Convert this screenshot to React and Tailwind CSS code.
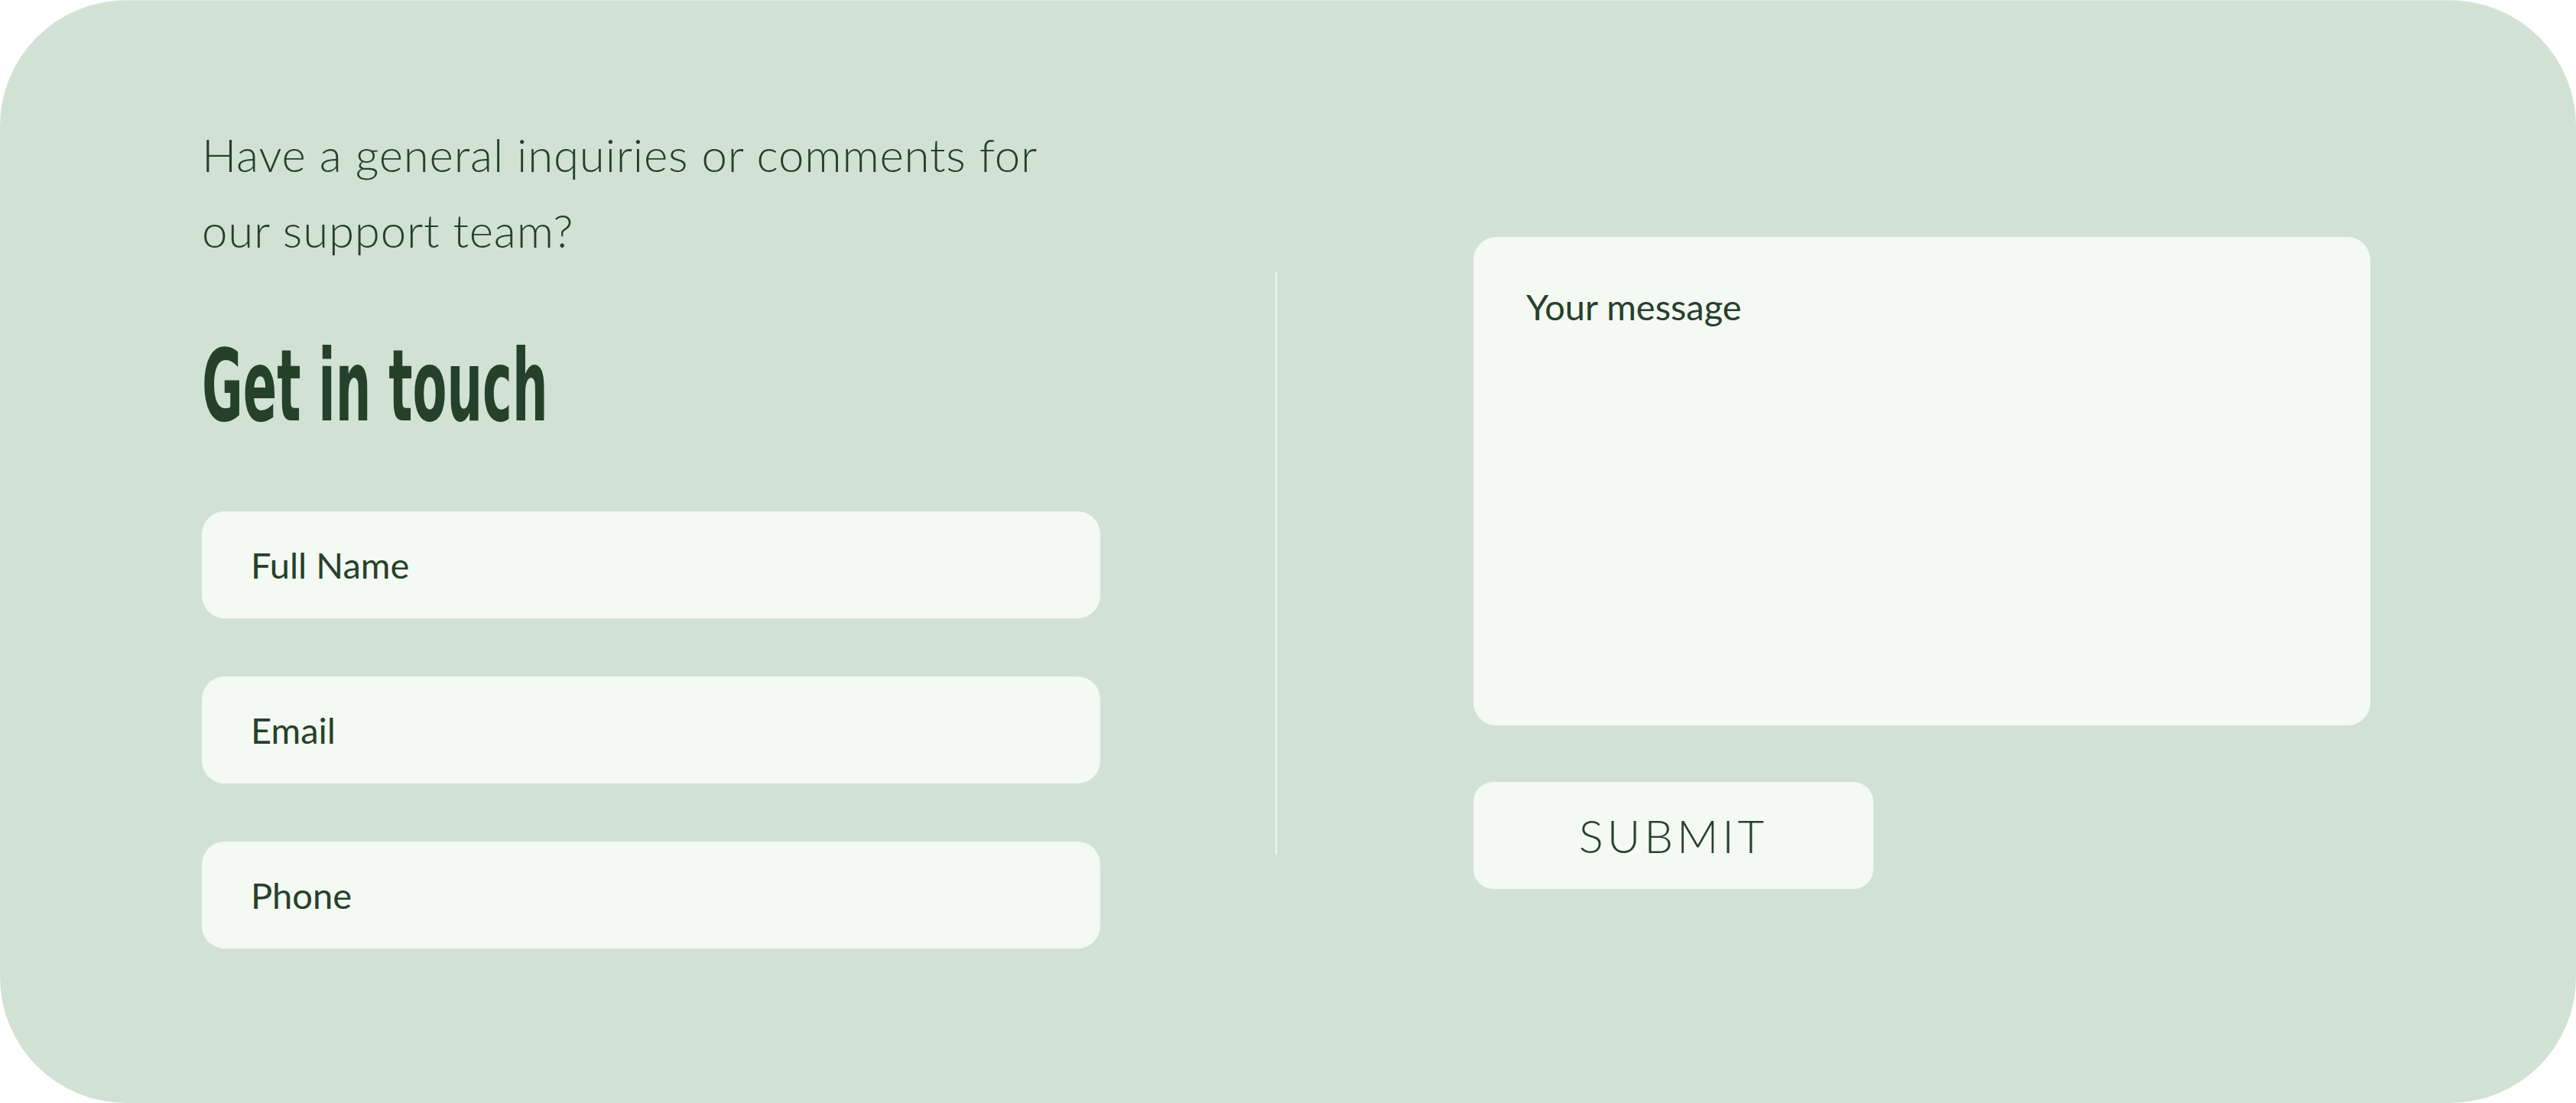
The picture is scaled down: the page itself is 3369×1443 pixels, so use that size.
import React from 'react';

const inputClass =
  "h-[140px] w-full rounded-[30px] bg-[#f4f9f3] pl-[64px] text-[47px] text-[#26412a] placeholder:text-[#26412a] outline-none font-['Lato','Open_Sans',sans-serif]";

const App = () => {
  return (
    <div className="min-h-screen w-full bg-white">
      <div className="flex h-[1443px] w-[3369px] items-start rounded-[165px] border-t border-[#e2eae3] bg-[#d1e2d4] pl-[264px]">
        {/* left column */}
        <div className="w-[1175px] pt-[152px]">
          <p className="font-['Lato','Open_Sans',sans-serif] text-[60px] font-light leading-[99px] tracking-[0.8px] text-[#26412a]">
            Have a general inquiries or comments for
            <br />
            our support team?
          </p>
          <h2 className="mt-[89px] inline-block origin-left scale-x-[0.56] whitespace-nowrap font-['DejaVu_Sans_Condensed','DejaVu_Sans',sans-serif] text-[130px] font-bold leading-none text-[#26412a]">
            Get in touch
          </h2>
          <div className="mt-[99px] flex flex-col gap-[76px]">
            <input className={inputClass} placeholder="Full Name" />
            <input className={inputClass} placeholder="Email" />
            <input className={inputClass} placeholder="Phone" />
          </div>
        </div>

        {/* divider */}
        <div className="ml-[229px] mt-[355px] h-[762px] w-[2px] bg-[#eef4ee]" />

        {/* right column */}
        <div className="ml-[257px] mt-[309px] flex w-[1173px] flex-col">
          <textarea
            className="h-[639px] w-full resize-none rounded-[30px] bg-[#f4f9f3] px-[69px] pt-[56px] font-['Lato','Open_Sans',sans-serif] text-[47px] text-[#26412a] outline-none placeholder:text-[#26412a]"
            placeholder="Your message"
          />
          <button className="mt-[74px] h-[140px] w-[523px] rounded-[26px] bg-[#f4f9f3] font-['Lato','Open_Sans',sans-serif] text-[60px] font-light tracking-[0.08em] text-[#26412a]">
            SUBMIT
          </button>
        </div>
      </div>
    </div>
  );
};

export default App;
